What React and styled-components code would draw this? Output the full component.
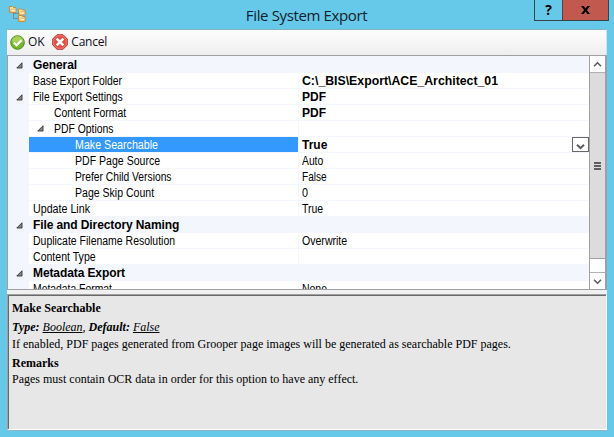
import React from 'react';
import styled, { createGlobalStyle } from 'styled-components';

const GlobalStyle = createGlobalStyle`
  body { margin: 0; overflow: hidden; }
  * { box-sizing: border-box; }
`;

const Window = styled.div`
  width: 614px;
  height: 437px;
  padding: 0 7px 7px;
  display: flex;
  flex-direction: column;
  background: #66c9ea;
  color: #000;
  font-family: "Liberation Sans", Arial, sans-serif;
`;

const TitleBar = styled.header`
  flex: 0 0 29px;
  display: grid;
  grid-template-columns: 73px 1fr 75px;
  margin-right: -2px;
  svg { display: block; }
`;

const AppIcon = styled.div`
  padding: 5px 0 0 2px;
`;

const Title = styled.h1`
  margin: 0;
  padding: 5px 1px 0 0;
  text-align: center;
  font: 400 15px/20px "Open Sans", sans-serif;
  letter-spacing: -0.37px;
  color: #10222a;
  white-space: nowrap;
`;

const Caption = styled.div`
  display: flex;
  width: 75px;
  height: 21px;
  border: 1px solid #34454c;
  border-top: 0;
`;

const CaptionButton = styled.button`
  width: ${(p) => (p.$close ? 46 : 27)}px;
  height: 20px;
  padding: 0;
  border: 0;
  display: flex;
  align-items: center;
  justify-content: center;
  background: ${(p) => (p.$close ? '#c1594f' : 'transparent')};
  border-left: ${(p) => (p.$close ? '1px solid #653c3c' : '0')};
  font: 700 14px/20px "Open Sans", sans-serif;
  color: #000;
`;

const Toolbar = styled.div`
  flex: 0 0 26px;
  display: flex;
  align-items: center;
  padding: 0 0 1px 3px;
  border-top: 1px solid #85b5c5;
  border-right: 1px solid #d5e3e8;
  background: linear-gradient(#fdfdfd, #eeeeee);
`;

const ToolButton = styled.button`
  display: flex;
  align-items: center;
  padding: 0;
  margin-right: 8px;
  border: 0;
  background: none;
  font: 400 12px/16px "Open Sans", sans-serif;
  letter-spacing: -0.2px;
  color: #10101c;
  svg { margin-right: 3px; flex: none; }
`;

const GridFrame = styled.div`
  flex: 0 0 235px;
  display: flex;
  border: 1px solid #a0a0a4;
  background: #fff;
  overflow: hidden;
`;

const Rows = styled.div`
  flex: 1;
  padding-top: 1px;
  overflow: hidden;
  background: #f3f6fc;
`;

const Row = styled.div`
  height: 16px;
  display: grid;
  grid-template-columns: 21px 270px 1fr;
  font-size: 12px;
  line-height: 17px;
  white-space: nowrap;
`;

const Gutter = styled.div`
  padding: 5px 0 0 8px;
  svg { display: block; }
`;

const Category = styled.div`
  grid-column: 2 / 4;
  padding-left: 4px;
  font-weight: 700;
  letter-spacing: -0.1px;
`;

const NameCell = styled.div`
  position: relative;
  height: 15px;
  padding-left: ${(p) => 4 + p.$level * 21}px;
  margin-right: 1px;
  background: ${(p) => (p.$selected ? '#3399ff' : '#fff')};
  color: ${(p) => (p.$selected ? '#fff' : '#000')};
`;

const Condensed = styled.span`
  display: inline-block;
  height: 15px;
  transform: scaleX(${(p) => p.$scale});
  transform-origin: 0 0;
`;

const Expander = styled.span`
  position: absolute;
  left: 8px;
  top: 4px;
  svg { display: block; }
`;

const ValueCell = styled.div`
  height: 15px;
  display: flex;
  justify-content: space-between;
  padding-left: 3px;
  background: #fff;
  font-weight: ${(p) => (p.$bold ? 700 : 400)};
`;

const DropButton = styled.button`
  width: 17px;
  height: 15px;
  padding: 3px 0 0;
  border: 1px solid #686868;
  background: #fff;
  display: flex;
  align-items: center;
  justify-content: center;
`;

const ScrollBar = styled.div`
  width: 17px;
  display: flex;
  flex-direction: column;
  background: #fff;
  border-left: 1px solid #a0a0a0;
  border-right: 1px solid #a0a0a0;
`;

const ScrollArrow = styled.div`
  flex: 0 0 17px;
  display: flex;
  align-items: center;
  justify-content: center;
  border-${(p) => (p.$down ? 'top' : 'bottom')}: 1px solid #b0b0b0;
`;

const Thumb = styled.div`
  flex: 0 0 186px;
  padding: 89px 4px 0;
  background: #dcdcdc;
  border-bottom: 1px solid #a0a0a0;
`;

const Grip = styled.div`
  height: 2px;
  width: 7px;
  margin-bottom: 1px;
  background: #606060;
`;

const Track = styled.div`
  flex: 1;
`;

const Splitter = styled.div`
  flex: 0 0 4px;
  background: #f0f0f0;
`;

const Help = styled.section`
  flex: 0 0 136px;
  padding: 5px 3px;
  border: 1px solid;
  border-color: #a0a0a0 #fafafa #fff #a0a0a0;
  box-shadow: inset 1px 1px #696969, 0 1px #8fb4c3;
  background: #e7e7e7;
  font: 12px/16px "Liberation Serif", "Times New Roman", serif;
`;

const HelpLine = styled.p`
  margin: ${(p) => (p.$gap ? p.$gap : 0)}px 0 0 1px;
  font-weight: ${(p) => (p.$bold ? 700 : 400)};
  font-style: ${(p) => (p.$italic ? 'italic' : 'normal')};
  white-space: nowrap;
`;

const Triangle = () => (
  <svg width="7" height="7" viewBox="0 0 7 7">
    <path d="M6 .8V6H.8Z" fill="#888" stroke="#333" strokeWidth=".9" />
  </svg>
);

const Chevron = ({ up, heavy }) => (
  <svg width="9" height="7" viewBox="0 0 9 7">
    <path
      d={up ? 'M1 5.2 4.5 1.8 8 5.2' : 'M1 1.8 4.5 5.2 8 1.8'}
      fill="none"
      stroke="#5c5c5c"
      strokeWidth={heavy ? 2 : 1.6}
    />
  </svg>
);

const FolderTree = () => (
  <svg width="17" height="17" viewBox="0 0 17 17">
    <path d="M4.5 7v6.5H10M4.5 8.5H10" fill="none" stroke="#788b91" />
    {[[0.5, 1.5], [9.5, 4], [9.5, 10.5]].map(([x, y]) => (
      <g key={`${x}-${y}`} transform={`translate(${x} ${y})`}>
        <path d="M0 0h3l1 1h2.5v5H0Z" fill="#fbdf9c" stroke="#c98a3c" />
        <path d="M.5 5.4 2 2.8h4.3v2.6Z" fill="#fff2c8" stroke="#dd9c48" strokeWidth=".7" />
      </g>
    ))}
  </svg>
);

const OkIcon = () => (
  <svg width="15" height="15" viewBox="0 0 15 15">
    <circle cx="7.5" cy="7.5" r="6.8" fill="#76b82a" stroke="#4c8a1c" />
    <path d="M1.6 7a5.9 5.9 0 0 1 11.8 0Q8 9 1.6 7Z" fill="#a2d058" />
    <path d="m3.8 7.5 2.8 2.8 4.8-5" fill="none" stroke="#fff" strokeWidth="2.2" />
  </svg>
);

const CancelIcon = () => (
  <svg width="16" height="16" viewBox="0 0 16 16">
    <path d="M5 .7h6L15.3 5v6L11 15.3H5L.7 11V5Z" fill="#e34b42" stroke="#b93934" />
    <path d="M5.3 1.8h5.4l3.5 3.5v5.4l-3.5 3.5H5.3l-3.5-3.5V5.3Z" fill="none" stroke="#f08b82" strokeWidth=".8" />
    <path d="m4.7 4.7 6.6 6.6m0-6.6-6.6 6.6" stroke="#fff" strokeWidth="2.5" />
  </svg>
);

const CloseIcon = () => (
  <svg width="9" height="8" viewBox="0 0 10 8" preserveAspectRatio="none">
    <path d="M0 0h3l2 2.5L7 0h3L6.6 4 10 8H7L5 5.5 3 8H0l3.4-4Z" fill="#000" />
  </svg>
);

const rows = [
  { category: 'General' },
  { name: 'Base Export Folder', scale: 0.867, value: 'C:\\_BIS\\Export\\ACE_Architect_01', bold: true, valueScale: 1.024 },
  { name: 'File Export Settings', scale: 0.862, value: 'PDF', bold: true, valueScale: 1, open: true },
  { name: 'Content Format', scale: 0.865, level: 1, value: 'PDF', bold: true, valueScale: 1 },
  { name: 'PDF Options', scale: 0.866, level: 1, expandable: true, value: '' },
  { name: 'Make Searchable', scale: 0.889, level: 2, value: 'True', bold: true, valueScale: 1, selected: true },
  { name: 'PDF Page Source', scale: 0.88, level: 2, value: 'Auto', valueScale: 0.86 },
  { name: 'Prefer Child Versions', scale: 0.856, level: 2, value: 'False', valueScale: 0.84 },
  { name: 'Page Skip Count', scale: 0.878, level: 2, value: '0', valueScale: 0.9 },
  { name: 'Update Link', scale: 0.89, value: 'True', valueScale: 0.87 },
  { category: 'File and Directory Naming' },
  { name: 'Duplicate Filename Resolution', scale: 0.873, value: 'Overwrite', valueScale: 0.88 },
  { name: 'Content Type', scale: 0.88, value: '' },
  { category: 'Metadata Export' },
  { name: 'Metadata Format', scale: 0.864, value: 'None', valueScale: 0.87 },
];

const PropertyRow = ({ row }) => (
  <Row>
    <Gutter>{(row.category || row.open) && <Triangle />}</Gutter>
    {row.category ? (
      <Category>{row.category}</Category>
    ) : (
      <>
        <NameCell $level={row.level || 0} $selected={row.selected}>
          {row.expandable && <Expander><Triangle /></Expander>}
          <Condensed $scale={row.scale}>{row.name}</Condensed>
        </NameCell>
        <ValueCell $bold={row.bold}>
          {row.value && <Condensed $scale={row.valueScale}>{row.value}</Condensed>}
          {row.selected && <DropButton aria-label="Choose value"><Chevron heavy /></DropButton>}
        </ValueCell>
      </>
    )}
  </Row>
);

export default function App() {
  return (
    <Window>
      <GlobalStyle />
      <TitleBar>
        <AppIcon><FolderTree /></AppIcon>
        <Title>File System Export</Title>
        <Caption>
          <CaptionButton>?</CaptionButton>
          <CaptionButton $close aria-label="Close"><CloseIcon /></CaptionButton>
        </Caption>
      </TitleBar>
      <Toolbar>
        <ToolButton><OkIcon />OK</ToolButton>
        <ToolButton><CancelIcon />Cancel</ToolButton>
      </Toolbar>
      <GridFrame>
        <Rows>{rows.map((row) => <PropertyRow key={row.category || row.name} row={row} />)}</Rows>
        <ScrollBar>
          <ScrollArrow><Chevron up /></ScrollArrow>
          <Thumb><Grip /><Grip /><Grip /></Thumb>
          <Track />
          <ScrollArrow $down><Chevron /></ScrollArrow>
        </ScrollBar>
      </GridFrame>
      <Splitter />
      <Help>
        <HelpLine $bold>Make Searchable</HelpLine>
        <HelpLine $gap={3} $italic><b>Type:</b> <u>Boolean</u>, <b>Default:</b> <u>False</u></HelpLine>
        <HelpLine $gap={1}>If enabled, PDF pages generated from Grooper page images will be generated as searchable PDF pages.</HelpLine>
        <HelpLine $gap={3} $bold>Remarks</HelpLine>
        <HelpLine>Pages must contain OCR data in order for this option to have any effect.</HelpLine>
      </Help>
    </Window>
  );
}
